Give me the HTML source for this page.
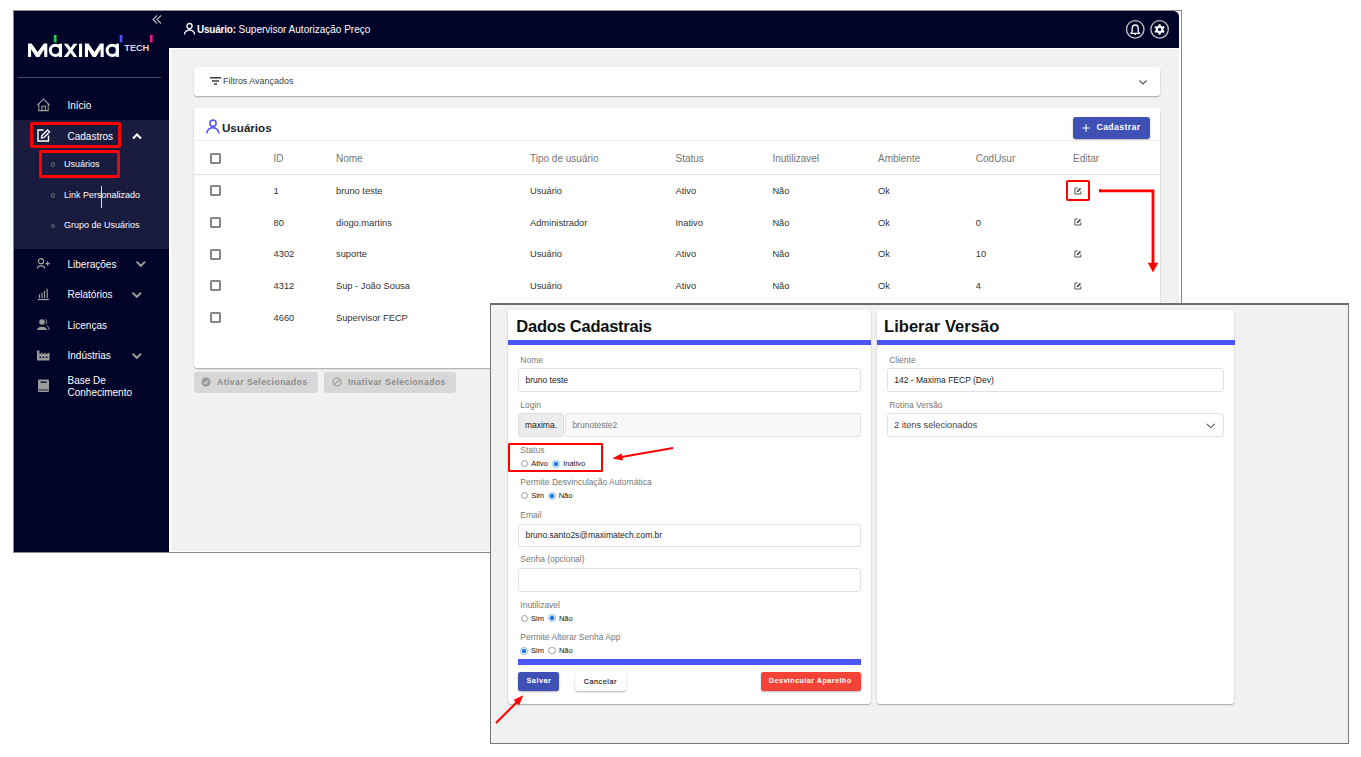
<!DOCTYPE html>
<html><head><meta charset="utf-8">
<style>
*{margin:0;padding:0;box-sizing:border-box}
html,body{width:1361px;height:757px;overflow:hidden;background:#fff;font-family:"Liberation Sans",sans-serif}
body>*{position:absolute}
.t{position:absolute;white-space:nowrap;line-height:1}
.sb{color:#fff;font-size:10px}
.ss{color:#fff;font-size:9px}
.card{background:#fff;border-radius:3px;box-shadow:0 1px 1.5px rgba(0,0,0,.3)}
.th{color:#757575;font-size:10px}
.td{color:#333;font-size:9.3px}
.cb{position:absolute;width:11px;height:11px;border:2px solid #868686;border-radius:1.5px}
.red{position:absolute;border:3px solid #f00;border-radius:2px}
.lb{color:#787878;font-size:8.5px}
.inp{background:#fff;border:1px solid #dfe2e6;border-radius:3px}
.iv{color:#222;font-size:8.5px}
.rl{color:#222;font-size:7.5px;-webkit-text-stroke:0.04px #222}
.ro{width:7.4px;height:7.4px;border:1px solid #9a9a9a;border-radius:50%;background:#fff}
.rc{width:8px;height:8px;border-radius:50%;background:radial-gradient(circle,#1a73e8 0,#1a73e8 1.9px,#e4effc 2.3px,#e4effc 2.6px,#9fc6f3 3.1px,#9fc6f3 4px,rgba(159,198,243,0) 4.3px)}
.bul{width:4.5px;height:4.5px;border:1px solid #6c6c7c;border-radius:50%}
.ic{fill:none;stroke:#a8a49a;stroke-width:1.2}
</style></head><body>
<!-- ============ background app screenshot ============ -->
<div style="left:13px;top:10px;width:1169px;height:543px;border:1px solid #8a8a8a;background:#fff"></div>
<div style="left:14px;top:11px;width:155px;height:541px;background:#010328"></div>
<div style="left:14px;top:120px;width:155px;height:129px;background:#1a1c3f"></div>
<div style="left:169px;top:11px;width:1010px;height:37px;background:#010328;border-top-right-radius:5.5px"></div>
<div style="left:170.6px;top:49px;width:1008.4px;height:502px;background:#f1f1f1"></div>

<!-- logo -->
<svg style="left:20px;top:30px" width="140" height="35" viewBox="20 30 140 35">
  <g fill="#fff">
    <polygon points="28,57 28,43.6 31.6,43.6 37.7,51.9 43.8,43.6 47.3,43.6 47.3,57 44.2,57 44.2,49.3 39.3,57 36.1,57 31.1,49.3 31.1,57"/>
    <rect x="58.9" y="43.7" width="3.1" height="13.3"/>
    <polygon points="63.8,43.7 67.6,43.7 77.4,57 73.6,57"/>
    <polygon points="73.6,43.7 77.4,43.7 67.6,57 63.8,57"/>
    <rect x="79" y="43.7" width="3.1" height="13.3"/>
    <polygon points="84.9,57 84.9,43.6 88.5,43.6 94.4,51.9 100.2,43.6 103.7,43.6 103.7,57 100.6,57 100.6,49.3 96,57 92.8,57 88,49.3 88,57"/>
    <rect x="115.8" y="43.7" width="3.1" height="13.3"/>
  </g>
  <g fill="none" stroke="#fff" stroke-width="3"><circle cx="55.5" cy="50.35" r="5.2"/><circle cx="112.3" cy="50.35" r="5.2"/></g>
  <rect x="53.8" y="35" width="2.7" height="7.4" fill="#14d850"/>
  <rect x="119.7" y="35" width="2.7" height="7.4" fill="#4d55f0"/>
  <rect x="149.9" y="35" width="2.8" height="7.4" fill="#f0148c"/>
</svg>
<div class="t" style="left:124.3px;top:44px;font-size:9.3px;font-weight:bold;color:#d6d6d6;letter-spacing:-0.1px">TECH</div>
<!-- collapse -->
<svg style="left:150px;top:13px" width="14" height="13" viewBox="0 0 14 13">
  <g fill="none" stroke="#b8b8b8" stroke-width="1.1"><polyline points="7,2.5 3,6.5 7,10.5"/><polyline points="11,2.5 7,6.5 11,10.5"/></g>
</svg>
<div style="left:18px;top:77px;width:143px;height:1px;background:#4c4c5c"></div>

<!-- sidebar items -->
<svg style="left:36px;top:98px" width="15" height="15" viewBox="0 0 15 15">
  <g class="ic" style="stroke-width:1.05"><polyline points="1.4,7.1 7.5,1 13.6,7.1"/><polyline points="2.8,5.7 2.8,12.6 12.2,12.6 12.2,5.7"/><polyline points="5.9,12.6 5.9,8.3 9.3,8.3 9.3,12.6"/></g>
</svg>
<div class="t sb" style="left:67.5px;top:101px">Início</div>

<svg style="left:36px;top:128px" width="15" height="15" viewBox="0 0 15 15">
  <g fill="none" stroke="#fff" stroke-width="1.4"><path d="M7.5,2 H2 V13 H12.5 V7.5"/><path d="M5.5,10 L5.8,7.8 L11.5,2 L13.5,4 L7.8,9.7 Z"/></g>
</svg>
<div class="t sb" style="left:67.5px;top:132px">Cadastros</div>
<svg style="left:131px;top:132px" width="12" height="8" viewBox="0 0 12 8"><polyline points="2,6.5 6,2.5 10,6.5" fill="none" stroke="#fff" stroke-width="2"/></svg>

<div class="bul" style="left:50.6px;top:162px"></div>
<div class="t ss" style="left:64px;top:160px">Usuários</div>
<div class="bul" style="left:50.6px;top:193px"></div>
<div class="t ss" style="left:64px;top:191px">Link Personalizado</div>
<div style="left:101px;top:186px;width:1px;height:22px;background:#e8dcae"></div>
<div class="bul" style="left:50.6px;top:223.5px"></div>
<div class="t ss" style="left:64px;top:221px">Grupo de Usuários</div>

<div class="red" style="left:29.6px;top:122px;width:91.2px;height:26px"></div>
<div class="red" style="left:39px;top:150px;width:80.5px;height:28px"></div>

<svg style="left:36px;top:257px" width="15" height="14" viewBox="0 0 15 14">
  <g class="ic"><circle cx="5" cy="4.3" r="2.6"/><path d="M1.3,11.5 C1.5,8 8.5,8 8.7,11.5"/><path d="M9.5,6.6 H13.8 M11.65,4.5 V8.7"/></g>
</svg>
<div class="t sb" style="left:67.5px;top:260px">Liberações</div>
<svg style="left:135px;top:260px" width="12" height="8" viewBox="0 0 12 8"><polyline points="1.5,1.6 5.8,5.8 10.1,1.6" fill="none" stroke="#a09c94" stroke-width="1.9"/></svg>

<svg style="left:36px;top:287px" width="15" height="14" viewBox="0 0 15 14">
  <g class="ic" style="stroke-width:1.1"><path d="M3.5,11 V7.3 M6,11 V5.5 M8.5,11 V3.8 M11.2,11 V1.8"/><path d="M2,12.5 H12.8" stroke-width="1.3"/></g>
</svg>
<div class="t sb" style="left:67.5px;top:290px">Relatórios</div>
<svg style="left:131px;top:291px" width="12" height="8" viewBox="0 0 12 8"><polyline points="1.5,1.6 5.8,5.8 10.1,1.6" fill="none" stroke="#a09c94" stroke-width="1.9"/></svg>

<svg style="left:36px;top:318px" width="15" height="14" viewBox="0 0 15 14">
  <circle cx="6" cy="4" r="2.8" fill="#9a9a9a"/><path d="M1,12 C1.3,7.5 10.7,7.5 11,12 Z" fill="#9a9a9a"/><path d="M9.3,1.3 C11.3,2.5 11.3,5.5 9.3,6.5 M11,7.5 C12.5,8.5 13,10 13,12" fill="none" stroke="#9a9a9a" stroke-width="1"/>
</svg>
<div class="t sb" style="left:67.5px;top:321px">Licenças</div>

<svg style="left:36px;top:349px" width="15" height="13" viewBox="0 0 15 13">
  <path d="M1,11.5 V1.5 H3.5 V5.5 L6.5,3.5 V5.5 L9.5,3.5 V5.5 L13.5,3.5 V11.5 Z" fill="#9a9a9a"/>
  <rect x="3.5" y="7.5" width="1.6" height="1.6" fill="#010328"/><rect x="6.7" y="7.5" width="1.6" height="1.6" fill="#010328"/><rect x="9.9" y="7.5" width="1.6" height="1.6" fill="#010328"/>
</svg>
<div class="t sb" style="left:67.5px;top:351px">Indústrias</div>
<svg style="left:131px;top:352px" width="12" height="8" viewBox="0 0 12 8"><polyline points="1.5,1.6 5.8,5.8 10.1,1.6" fill="none" stroke="#a09c94" stroke-width="1.9"/></svg>

<svg style="left:36px;top:378px" width="15" height="15" viewBox="0 0 15 15">
  <rect x="2" y="1.5" width="11" height="12.5" rx="1" fill="#9a9a9a"/><rect x="4.5" y="3.5" width="6" height="1.3" fill="#010328"/><rect x="2.5" y="11.6" width="10" height="0.8" fill="#010328"/>
</svg>
<div class="t sb" style="left:67.5px;top:376px">Base De</div>
<div class="t sb" style="left:67.5px;top:388px">Conhecimento</div>

<!-- header -->
<svg style="left:183px;top:22px" width="14" height="14" viewBox="0 0 14 14">
  <g fill="none" stroke="#fff" stroke-width="1.3"><circle cx="6.5" cy="4.1" r="2.6"/><path d="M1.4,12.6 A5.1,4.6 0 0 1 11.6,12.6"/></g>
</svg>
<div class="t" style="left:197px;top:25px;font-size:10px;color:#fff"><b style="letter-spacing:-0.22px">Usuário:</b> Supervisor Autorização Preço</div>
<svg style="left:1120px;top:15px" width="55" height="30" viewBox="1120 15 55 30">
  <g fill="none" stroke="#c4c4c4" stroke-width="1.35"><circle cx="1135.25" cy="29.3" r="8.75"/><circle cx="1159.6" cy="29.3" r="8.75"/></g>
  <path d="M1135.2,25 C1133,25 1132.2,26.6 1132.2,28.6 V31.6 L1131.1,33.4 H1139.3 L1138.2,31.6 V28.6 C1138.2,26.6 1137.4,25 1135.2,25 Z" fill="none" stroke="#fff" stroke-width="1.3"/>
  <path d="M1134.3,34.6 H1136.1" stroke="#fff" stroke-width="1"/>
  <polygon points="1158.46,25.72 1158.57,24.15 1160.63,24.15 1160.74,25.72 1161.12,25.86 1161.95,26.34 1162.26,26.60 1163.68,25.91 1164.71,27.69 1163.40,28.57 1163.47,28.97 1163.47,29.93 1163.40,30.33 1164.71,31.21 1163.68,32.99 1162.26,32.30 1161.95,32.56 1161.12,33.04 1160.74,33.18 1160.63,34.75 1158.57,34.75 1158.46,33.18 1158.08,33.04 1157.25,32.56 1156.94,32.30 1155.52,32.99 1154.49,31.21 1155.80,30.33 1155.73,29.93 1155.73,28.97 1155.80,28.57 1154.49,27.69 1155.52,25.91 1156.94,26.60 1157.25,26.34 1158.08,25.86" fill="#fff"/>
  <circle cx="1159.6" cy="29.45" r="1.6" fill="#010328"/>
</svg>

<!-- filter card -->
<div class="card" style="left:194px;top:67px;width:966px;height:29px"></div>
<svg style="left:209px;top:76px" width="13" height="10" viewBox="0 0 13 10"><path d="M1,1.8 H12 M3,5 H10 M5,8.1 H8" stroke="#3a3a3a" stroke-width="1.5"/></svg>
<div class="t" style="left:223px;top:76.5px;font-size:8.95px;color:#444">Filtros Avançados</div>
<svg style="left:1137px;top:78px" width="12" height="8" viewBox="0 0 12 8"><polyline points="2.5,2.5 6,6 9.5,2.5" fill="none" stroke="#555" stroke-width="1.2"/></svg>

<!-- users card -->
<div class="card" style="left:194px;top:108px;width:966px;height:260px"></div>
<svg style="left:205px;top:119px" width="16" height="16" viewBox="0 0 16 16">
  <g fill="none" stroke="#5b5bf5" stroke-width="1.6"><circle cx="8" cy="4.2" r="3.1"/><path d="M1.8,14.6 A6.05,6 0 0 1 13.9,14.6"/></g>
</svg>
<div class="t" style="left:222px;top:122.3px;font-size:11.6px;font-weight:bold;color:#222">Usuários</div>
<div style="left:1073px;top:117px;width:77px;height:22px;background:#3f51b5;border-radius:3px;box-shadow:0 1px 2px rgba(0,0,0,.3)"></div>
<svg style="left:1081px;top:122.5px" width="10" height="10" viewBox="0 0 10 10"><path d="M5,1.3 V8.7 M1.3,5 H8.7" stroke="#fff" stroke-width="1.1"/></svg>
<div class="t" style="left:1096.5px;top:123px;font-size:8.6px;font-weight:bold;color:#fff;letter-spacing:0.42px">Cadastrar</div>
<div style="left:194px;top:140px;width:966px;height:1px;background:#ececec"></div>

<div class="cb" style="left:210px;top:152.5px"></div>
<div class="t th" style="left:273.6px;top:153.5px">ID</div>
<div class="t th" style="left:336px;top:153.5px">Nome</div>
<div class="t th" style="left:530px;top:153.5px">Tipo de usuário</div>
<div class="t th" style="left:675.5px;top:153.5px">Status</div>
<div class="t th" style="left:772.4px;top:153.5px">Inutilizavel</div>
<div class="t th" style="left:878px;top:153.5px">Ambiente</div>
<div class="t th" style="left:975.8px;top:153.5px">CodUsur</div>
<div class="t th" style="left:1073px;top:153.5px">Editar</div>
<div style="left:194px;top:174px;width:966px;height:1px;background:#e6e6e6"></div>

<div class="cb" style="left:210px;top:185.00px"></div>
<div class="t td" style="left:273.6px;top:186.93px">1</div>
<div class="t td" style="left:336px;top:186.93px">bruno teste</div>
<div class="t td" style="left:530px;top:186.93px">Usuário</div>
<div class="t td" style="left:675.5px;top:186.93px">Ativo</div>
<div class="t td" style="left:772.4px;top:186.93px">Não</div>
<div class="t td" style="left:878px;top:186.93px">Ok</div>
<svg style="left:1073.5px;top:186.70px" width="8" height="8" viewBox="0 0 8 8"><path d="M3.8,1 H0.9 V7 H6.9 V4.2" fill="none" stroke="#444" stroke-width="0.9"/><path d="M2.7,5.1 L2.9,3.9 L6,0.8 L7.1,1.9 L4,5 Z" fill="#444"/></svg>
<div class="cb" style="left:210px;top:216.75px"></div>
<div class="t td" style="left:273.6px;top:218.68px">80</div>
<div class="t td" style="left:336px;top:218.68px">diogo.martins</div>
<div class="t td" style="left:530px;top:218.68px">Administrador</div>
<div class="t td" style="left:675.5px;top:218.68px">Inativo</div>
<div class="t td" style="left:772.4px;top:218.68px">Não</div>
<div class="t td" style="left:878px;top:218.68px">Ok</div>
<div class="t td" style="left:975.8px;top:218.68px">0</div>
<svg style="left:1073.5px;top:218.45px" width="8" height="8" viewBox="0 0 8 8"><path d="M3.8,1 H0.9 V7 H6.9 V4.2" fill="none" stroke="#444" stroke-width="0.9"/><path d="M2.7,5.1 L2.9,3.9 L6,0.8 L7.1,1.9 L4,5 Z" fill="#444"/></svg>
<div class="cb" style="left:210px;top:248.50px"></div>
<div class="t td" style="left:273.6px;top:250.43px">4302</div>
<div class="t td" style="left:336px;top:250.43px">suporte</div>
<div class="t td" style="left:530px;top:250.43px">Usuário</div>
<div class="t td" style="left:675.5px;top:250.43px">Ativo</div>
<div class="t td" style="left:772.4px;top:250.43px">Não</div>
<div class="t td" style="left:878px;top:250.43px">Ok</div>
<div class="t td" style="left:975.8px;top:250.43px">10</div>
<svg style="left:1073.5px;top:250.20px" width="8" height="8" viewBox="0 0 8 8"><path d="M3.8,1 H0.9 V7 H6.9 V4.2" fill="none" stroke="#444" stroke-width="0.9"/><path d="M2.7,5.1 L2.9,3.9 L6,0.8 L7.1,1.9 L4,5 Z" fill="#444"/></svg>
<div class="cb" style="left:210px;top:280.25px"></div>
<div class="t td" style="left:273.6px;top:282.18px">4312</div>
<div class="t td" style="left:336px;top:282.18px">Sup - João Sousa</div>
<div class="t td" style="left:530px;top:282.18px">Usuário</div>
<div class="t td" style="left:675.5px;top:282.18px">Ativo</div>
<div class="t td" style="left:772.4px;top:282.18px">Não</div>
<div class="t td" style="left:878px;top:282.18px">Ok</div>
<div class="t td" style="left:975.8px;top:282.18px">4</div>
<svg style="left:1073.5px;top:281.95px" width="8" height="8" viewBox="0 0 8 8"><path d="M3.8,1 H0.9 V7 H6.9 V4.2" fill="none" stroke="#444" stroke-width="0.9"/><path d="M2.7,5.1 L2.9,3.9 L6,0.8 L7.1,1.9 L4,5 Z" fill="#444"/></svg>
<div class="cb" style="left:210px;top:312.00px"></div>
<div class="t td" style="left:273.6px;top:313.93px">4660</div>
<div class="t td" style="left:336px;top:313.93px">Supervisor FECP</div>

<!-- bottom buttons -->
<div style="left:194px;top:371.5px;width:124px;height:21.5px;background:#d7d7d7;border-radius:3px"></div>
<svg style="left:201px;top:377px" width="10" height="10" viewBox="0 0 10 10"><circle cx="5" cy="5" r="4.5" fill="#999"/><polyline points="2.8,5.1 4.4,6.6 7.3,3.6" fill="none" stroke="#dcdcdc" stroke-width="1.2"/></svg>
<div class="t" style="left:217px;top:378px;font-size:8.6px;font-weight:bold;color:#8c8c8c;letter-spacing:0.45px">Ativar Selecionados</div>
<div style="left:324px;top:371.5px;width:132px;height:21.5px;background:#d7d7d7;border-radius:3px"></div>
<svg style="left:332px;top:377px" width="10" height="10" viewBox="0 0 10 10"><circle cx="5" cy="5" r="4" fill="none" stroke="#999" stroke-width="1.1"/><path d="M2.3,7.7 L7.7,2.3" stroke="#999" stroke-width="1.1"/></svg>
<div class="t" style="left:348px;top:378px;font-size:8.6px;font-weight:bold;color:#8c8c8c;letter-spacing:0.45px">Inativar Selecionados</div>

<!-- edit arrow -->
<div style="left:1066px;top:179.5px;width:24px;height:21.5px;border:2.4px solid #f00;border-radius:2px"></div>
<svg style="left:1095px;top:185px" width="66" height="92" viewBox="0 0 66 92">
  <path d="M4.2,5.9 H58 V79" fill="none" stroke="#f00" stroke-width="2.8"/><path d="M5,4.1 V7.3" stroke="#f00" stroke-width="1.8"/>
  <path d="M52.8,77.8 H63.2 L58,87.5 Z" fill="#f00"/>
</svg>

<!-- ============ popup ============ -->
<div style="left:490px;top:303px;width:859px;height:441px;border:1px solid #777;border-top:2px solid #6c6c74;background:#f1f1f1"></div>
<div class="card" style="left:508px;top:309.5px;width:363px;height:394.5px"></div>
<div class="card" style="left:876.5px;top:309.5px;width:357.7px;height:394.5px"></div>
<div class="t " style="left:516.3px;top:318.13px;font-size:16.5px;font-weight:bold;color:#111;letter-spacing:-0.25px">Dados Cadastrais</div>
<div style="left:508px;top:340px;width:363px;height:5.1px;background:#4a55fa"></div>
<div class="t lb" style="left:520.3px;top:355.60px;">Nome</div>
<div class="inp" style="left:518.3px;top:368.4px;width:342.5px;height:23.5px"></div>
<div class="t iv" style="left:525.5px;top:375.50px;">bruno teste</div>
<div class="t lb" style="left:520.3px;top:400.80px;">Login</div>
<div style="left:518.3px;top:413.4px;width:46px;height:23.9px;background:#ececec;border:1px solid #dcdcdc;border-radius:3px"></div>
<div style="left:564.8px;top:413.4px;width:296px;height:23.9px;background:#f8f8f8;border:1px solid #e2e2e2;border-radius:3px"></div>
<div class="t iv" style="left:524.9px;top:420.70px;">maxima.</div>
<div class="t iv" style="left:572.4px;top:420.70px;color:#777">brunoteste2</div>
<div class="t lb" style="left:520.3px;top:445.80px;">Status</div>
<div class="ro" style="left:520.50px;top:459.80px"></div>
<div class="t rl" style="left:531.2px;top:460.15px;">Ativo</div>
<div class="rc" style="left:551.90px;top:459.50px"></div>
<div class="t rl" style="left:563.2px;top:460.15px;">Inativo</div>
<div class="t lb" style="left:520.3px;top:478.20px;">Permite Desvinculação Automática</div>
<div class="ro" style="left:520.50px;top:491.90px"></div>
<div class="t rl" style="left:531.2px;top:492.25px;">Sim</div>
<div class="rc" style="left:548.00px;top:491.60px"></div>
<div class="t rl" style="left:558.7px;top:492.25px;">Não</div>
<div class="t lb" style="left:520.3px;top:510.60px;">Email</div>
<div class="inp" style="left:518.3px;top:523.5px;width:342.5px;height:23.2px"></div>
<div class="t iv" style="left:525.5px;top:530.50px;">bruno.santo2s@maximatech.com.br</div>
<div class="t lb" style="left:520.3px;top:555.40px;">Senha (opcional)</div>
<div class="inp" style="left:518.3px;top:568px;width:342.5px;height:23.5px"></div>
<div class="t lb" style="left:520.3px;top:600.50px;">Inutilizavel</div>
<div class="ro" style="left:520.60px;top:614.50px"></div>
<div class="t rl" style="left:531.1px;top:614.85px;">Sim</div>
<div class="rc" style="left:548.00px;top:614.20px"></div>
<div class="t rl" style="left:558.9px;top:614.85px;">Não</div>
<div class="t lb" style="left:520.3px;top:632.70px;">Permite Alterar Senha App</div>
<div class="rc" style="left:520.30px;top:646.50px"></div>
<div class="t rl" style="left:531.1px;top:647.15px;">Sim</div>
<div class="ro" style="left:548.30px;top:646.80px"></div>
<div class="t rl" style="left:558.9px;top:647.15px;">Não</div>
<div style="left:518.2px;top:659.1px;width:342.6px;height:5.5px;background:#4a55fa"></div>
<div style="left:518.3px;top:672.3px;width:41px;height:18.8px;background:#3f51b5;border-radius:2.5px;box-shadow:0 1px 2px rgba(0,0,0,.3)"></div>
<div class="t " style="left:526.5px;top:676.82px;font-size:7.3px;font-weight:bold;color:#fff;letter-spacing:0.5px">Salvar</div>
<div style="left:575px;top:672.3px;width:51px;height:18.8px;background:#fff;border-radius:2.5px;box-shadow:0 1px 2px rgba(0,0,0,.3)"></div>
<div class="t " style="left:583.7px;top:677.82px;font-size:7.3px;color:#222;letter-spacing:0.5px;-webkit-text-stroke:0.15px #222">Cancelar</div>
<div style="left:760.8px;top:672.3px;width:100px;height:18.8px;background:#f44336;border-radius:2.5px;box-shadow:0 1px 2px rgba(0,0,0,.3)"></div>
<div class="t " style="left:768.8px;top:676.82px;font-size:7.3px;font-weight:bold;color:#fff;letter-spacing:0.4px">Desvincular Aparelho</div>
<div class="t " style="left:884px;top:318.13px;font-size:16.5px;font-weight:bold;color:#111;letter-spacing:0.05px">Liberar Versão</div>
<div style="left:876.5px;top:340px;width:358px;height:5.1px;background:#4a55fa"></div>
<div class="t lb" style="left:889.2px;top:355.60px;">Cliente</div>
<div class="inp" style="left:887.4px;top:368.4px;width:336.2px;height:23.8px"></div>
<div class="t iv" style="left:894.3px;top:375.50px;">142 - Maxima FECP (Dev)</div>
<div class="t lb" style="left:889.2px;top:400.80px;">Rotina Versão</div>
<div class="inp" style="left:887.4px;top:413.4px;width:336.2px;height:24px"></div>
<div class="t iv" style="left:894px;top:420.71px;font-size:9.2px;color:#444">2 itens selecionados</div>
<svg style="left:1205px;top:421.5px" width="11" height="8" viewBox="0 0 11 8"><polyline points="1.8,1.8 5.8,5.6 9.8,1.8" fill="none" stroke="#555" stroke-width="1.1"/></svg>
<div style="left:508.3px;top:443px;width:95.2px;height:29px;border:2px solid #f00;border-radius:1px"></div>
<svg style="left:600px;top:440px" width="80" height="25" viewBox="0 0 80 25"><path d="M73,7.9 L20,17.2" stroke="#f00" stroke-width="2"/><path d="M12.4,18.5 L21.6,13.4 L22.9,20.6 Z" fill="#f00"/></svg>
<svg style="left:490px;top:690px" width="40" height="40" viewBox="0 0 40 40"><path d="M6,33 L28,11" stroke="#f00" stroke-width="2"/><path d="M33.3,5.3 L23.5,10 L29,15.5 Z" fill="#f00"/></svg>
</body></html>
